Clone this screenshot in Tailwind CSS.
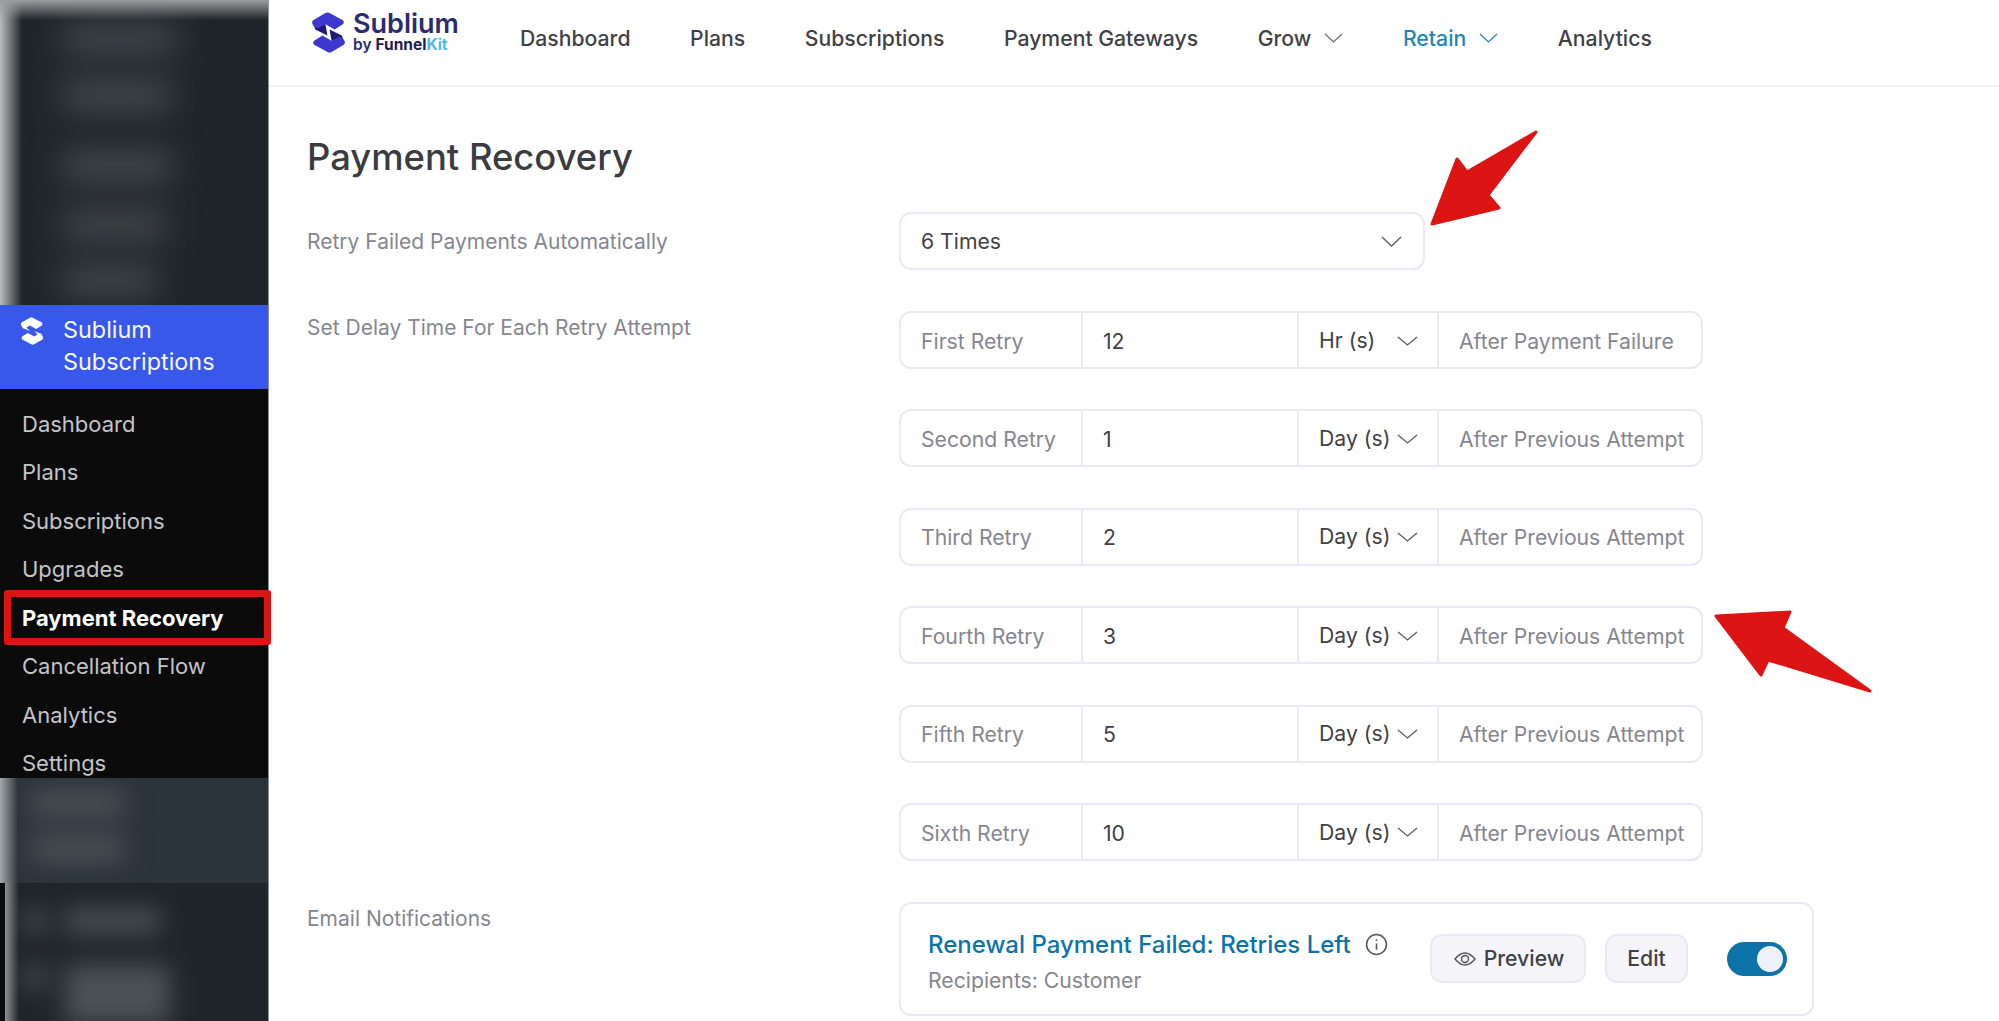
<!DOCTYPE html>
<html lang="en">
<head>
  <meta charset="UTF-8">
  <meta name="viewport" content="width=device-width, initial-scale=1.0">
  <title>Payment Recovery - Sublium</title>
  <script src="https://cdn.jsdelivr.net/npm/@tailwindcss/browser@4"></script>
</head>
<body class="bg-white font-['Inter',sans-serif] text-[21.2px] text-[#3f4146]">
  <div class="relative flex h-[1021px] w-[1999px] overflow-hidden">

    <!-- sidebar -->
    <aside class="flex h-full w-[269px] shrink-0 flex-col border-r border-[#8d9296] bg-[#202529]">
      <!-- blurred wp menu, top -->
      <div class="relative h-[305px] shrink-0 overflow-hidden">
        <div class="flex flex-col pl-[62px] pt-[26px] blur-[16px]">
          <div class="h-[26px] w-[115px] bg-[#474c50]"></div>
          <div class="mt-[30px] h-[28px] w-[110px] bg-[#474c50]"></div>
          <div class="mt-[42px] h-[28px] w-[110px] bg-[#474c50]"></div>
          <div class="mt-[32px] h-[26px] w-[105px] bg-[#474c50]"></div>
          <div class="mt-[30px] h-[26px] w-[95px] bg-[#474c50]"></div>
        </div>
        <div class="absolute inset-y-0 left-0 w-[22px] bg-linear-to-r from-[#b9bcbe] to-transparent"></div>
        <div class="absolute inset-x-0 top-0 h-[20px] bg-linear-to-b from-[#9a9da0] to-transparent"></div>
      </div>

      <!-- plugin menu -->
      <div class="flex h-[84px] shrink-0 items-start gap-[19px] bg-[#3858e9] pl-[20px] pt-[9px] text-[23.4px] leading-[32px] text-[#f4f6fe]">
        <svg class="mt-[3px] h-[28px] w-[24px] shrink-0" viewBox="0 0 32 40" fill="#fff">
          <path d="M13 1 Q15 0 17 1 L30 8 Q32 10 30 12 L22 17 L13 12 L8 15 L13 20 L3 16 L1 13 Q-1 10 1 8 Z"/>
          <path d="M19 39 Q17 40 15 39 L2 32 Q0 30 2 28 L10 23 L19 28 L24 25 L19 20 L29 24 L31 27 Q33 30 31 32 Z"/>
        </svg>
        <div>Sublium<br>Subscriptions</div>
      </div>
      <nav class="flex h-[389px] shrink-0 flex-col overflow-hidden bg-[#0b0b0c] pl-[22px] pt-[11px] text-[22px] text-[#c3c4c7]">
        <a class="flex h-[48.5px] shrink-0 items-center">Dashboard</a>
        <a class="flex h-[48.5px] shrink-0 items-center">Plans</a>
        <a class="flex h-[48.5px] shrink-0 items-center">Subscriptions</a>
        <a class="flex h-[48.5px] shrink-0 items-center">Upgrades</a>
        <a class="flex h-[48.5px] shrink-0 items-center font-bold text-white">Payment Recovery</a>
        <a class="flex h-[48.5px] shrink-0 items-center">Cancellation Flow</a>
        <a class="flex h-[48.5px] shrink-0 items-center">Analytics</a>
        <a class="flex h-[48.5px] shrink-0 items-center">Settings</a>
      </nav>

      <!-- blurred wp menu, bottom -->
      <div class="relative h-[105px] shrink-0 overflow-hidden bg-[#2b333b]">
        <div class="flex flex-col pl-[30px] pt-[12px] blur-[13px]">
          <div class="h-[26px] w-[95px] bg-[#4c5155]"></div>
          <div class="mt-[20px] h-[26px] w-[95px] bg-[#4c5155]"></div>
        </div>
        <div class="absolute inset-y-0 left-0 w-[18px] bg-linear-to-r from-[#a5a8aa] to-transparent"></div>
      </div>
      <div class="relative flex-1 overflow-hidden border-l-[5px] border-[#0b0b0c]">
        <div class="flex flex-col pl-[18px] pt-[26px] blur-[12px]">
          <div class="flex items-center gap-[18px]">
            <div class="h-[24px] w-[24px] rounded-full bg-[#4c5155]"></div>
            <div class="h-[24px] w-[95px] bg-[#4c5155]"></div>
          </div>
          <div class="mt-[32px] flex items-start gap-[18px]">
            <div class="h-[24px] w-[24px] rounded-full bg-[#4c5155]"></div>
            <div class="h-[60px] w-[105px] bg-[#4c5155]"></div>
          </div>
        </div>
        <div class="absolute inset-y-0 left-0 w-[14px] bg-linear-to-r from-[#8f9294] to-transparent"></div>
      </div>
    </aside>

    <!-- main -->
    <main class="flex min-w-0 flex-1 flex-col">
      <header class="flex h-[87px] shrink-0 items-center border-b-2 border-[#f3f3f5] pb-[8px] pl-[43px]">
        <svg class="-mt-[12px] h-[41px] w-[33px] shrink-0" viewBox="0 0 32 40">
          <path fill="#1f1a7a" d="M1 11 L13 12 L15 23 L3 17 Z"/>
          <path fill="#1f1a7a" d="M31 29 L19 28 L17 17 L29 23 Z"/>
          <path fill="#4038cc" d="M13 1 Q15 0 17 1 L30 8 Q32 10 30 12 L22 17 L13 12 L5 16 L1 13 Q-1 10 1 8 Z"/>
          <path fill="#4038cc" d="M19 39 Q17 40 15 39 L2 32 Q0 30 2 28 L10 23 L19 28 L27 24 L31 27 Q33 30 31 32 Z"/>
        </svg>
        <div class="-mt-[13px] ml-[8px] w-[105px]">
          <div class="text-[27px] font-semibold leading-[25px] text-[#2d2a6e]">Sublium</div>
          <div class="whitespace-nowrap text-[15.5px] font-semibold leading-[18px] text-[#2d2a6e]">by <span class="font-bold text-[#1f1d55]">Funnel</span><span class="font-bold text-[#4cb8f2]">Kit</span></div>
        </div>
        <nav class="ml-[62px] flex items-center gap-[59.6px] font-medium">
          <a>Dashboard</a>
          <a>Plans</a>
          <a>Subscriptions</a>
          <a>Payment Gateways</a>
          <a class="flex items-center gap-[13px]">Grow
            <svg class="h-[10px] w-[19px]" viewBox="0 0 19 10" fill="none" stroke="#6b6c72" stroke-width="1.2"><path d="M1 1 L9.5 9 L18 1"/></svg>
          </a>
          <a class="flex items-center gap-[13px] text-[#1d86bb]">Retain
            <svg class="h-[10px] w-[19px]" viewBox="0 0 19 10" fill="none" stroke="currentColor" stroke-width="1.2"><path d="M1 1 L9.5 9 L18 1"/></svg>
          </a>
          <a>Analytics</a>
        </nav>
      </header>

      <section class="pl-[38px] pt-[48px]">
        <h1 class="text-[36.4px] font-medium leading-[44px] text-[#3a3c41]">Payment Recovery</h1>

        <div class="mt-[33px] flex items-center">
          <div class="w-[592px] pt-[1px] text-[21px] text-[#85868f]">Retry Failed Payments Automatically</div>
          <div class="flex h-[58px] w-[526px] items-center justify-between rounded-[12px] border-2 border-[#e9e9f3] pl-[20px] pr-[21px] pt-[1px]">
            6 Times
            <svg class="h-[11px] w-[21px]" viewBox="0 0 21 11" fill="none" stroke="#5c5d63" stroke-width="1.3"><path d="M1 1 L10.5 10 L20 1"/></svg>
          </div>
        </div>

        <div class="mt-[41px] flex">
          <div class="w-[592px] pt-[1px] text-[21px] text-[#85868f]">Set Delay Time For Each Retry Attempt</div>
          <div class="flex flex-col gap-[40.4px]">
            <div class="flex h-[58px] w-[804px] divide-x-2 divide-[#e9e9f3] rounded-[12px] border-2 border-[#e9e9f3]">
              <div class="flex w-[182px] items-center pl-[20px] pt-[3px] text-[#85868f]">First Retry</div>
              <div class="flex w-[216px] items-center pl-[20px] pt-[3px]">12</div>
              <div class="flex w-[140px] items-center justify-between pl-[20px] pr-[19px] pt-[1px]">Hr (s)
                <svg class="h-[10px] w-[21px]" viewBox="0 0 21 10" fill="none" stroke="#5c5d63" stroke-width="1.3"><path d="M1 1 L10.5 9 L20 1"/></svg>
              </div>
              <div class="flex flex-1 items-center whitespace-nowrap pl-[20px] pt-[3px] text-[#85868f]">After Payment Failure</div>
            </div>
            <div class="flex h-[58px] w-[804px] divide-x-2 divide-[#e9e9f3] rounded-[12px] border-2 border-[#e9e9f3]">
              <div class="flex w-[182px] items-center pl-[20px] pt-[3px] text-[#85868f]">Second Retry</div>
              <div class="flex w-[216px] items-center pl-[20px] pt-[3px]">1</div>
              <div class="flex w-[140px] items-center justify-between whitespace-nowrap pl-[20px] pr-[19px] pt-[1px]">Day (s)
                <svg class="h-[10px] w-[21px]" viewBox="0 0 21 10" fill="none" stroke="#5c5d63" stroke-width="1.3"><path d="M1 1 L10.5 9 L20 1"/></svg>
              </div>
              <div class="flex flex-1 items-center whitespace-nowrap pl-[20px] pt-[3px] text-[#85868f]">After Previous Attempt</div>
            </div>
            <div class="flex h-[58px] w-[804px] divide-x-2 divide-[#e9e9f3] rounded-[12px] border-2 border-[#e9e9f3]">
              <div class="flex w-[182px] items-center pl-[20px] pt-[3px] text-[#85868f]">Third Retry</div>
              <div class="flex w-[216px] items-center pl-[20px] pt-[3px]">2</div>
              <div class="flex w-[140px] items-center justify-between whitespace-nowrap pl-[20px] pr-[19px] pt-[1px]">Day (s)
                <svg class="h-[10px] w-[21px]" viewBox="0 0 21 10" fill="none" stroke="#5c5d63" stroke-width="1.3"><path d="M1 1 L10.5 9 L20 1"/></svg>
              </div>
              <div class="flex flex-1 items-center whitespace-nowrap pl-[20px] pt-[3px] text-[#85868f]">After Previous Attempt</div>
            </div>
            <div class="flex h-[58px] w-[804px] divide-x-2 divide-[#e9e9f3] rounded-[12px] border-2 border-[#e9e9f3]">
              <div class="flex w-[182px] items-center pl-[20px] pt-[3px] text-[#85868f]">Fourth Retry</div>
              <div class="flex w-[216px] items-center pl-[20px] pt-[3px]">3</div>
              <div class="flex w-[140px] items-center justify-between whitespace-nowrap pl-[20px] pr-[19px] pt-[1px]">Day (s)
                <svg class="h-[10px] w-[21px]" viewBox="0 0 21 10" fill="none" stroke="#5c5d63" stroke-width="1.3"><path d="M1 1 L10.5 9 L20 1"/></svg>
              </div>
              <div class="flex flex-1 items-center whitespace-nowrap pl-[20px] pt-[3px] text-[#85868f]">After Previous Attempt</div>
            </div>
            <div class="flex h-[58px] w-[804px] divide-x-2 divide-[#e9e9f3] rounded-[12px] border-2 border-[#e9e9f3]">
              <div class="flex w-[182px] items-center pl-[20px] pt-[3px] text-[#85868f]">Fifth Retry</div>
              <div class="flex w-[216px] items-center pl-[20px] pt-[3px]">5</div>
              <div class="flex w-[140px] items-center justify-between whitespace-nowrap pl-[20px] pr-[19px] pt-[1px]">Day (s)
                <svg class="h-[10px] w-[21px]" viewBox="0 0 21 10" fill="none" stroke="#5c5d63" stroke-width="1.3"><path d="M1 1 L10.5 9 L20 1"/></svg>
              </div>
              <div class="flex flex-1 items-center whitespace-nowrap pl-[20px] pt-[3px] text-[#85868f]">After Previous Attempt</div>
            </div>
            <div class="flex h-[58px] w-[804px] divide-x-2 divide-[#e9e9f3] rounded-[12px] border-2 border-[#e9e9f3]">
              <div class="flex w-[182px] items-center pl-[20px] pt-[3px] text-[#85868f]">Sixth Retry</div>
              <div class="flex w-[216px] items-center pl-[20px] pt-[3px]">10</div>
              <div class="flex w-[140px] items-center justify-between whitespace-nowrap pl-[20px] pr-[19px] pt-[1px]">Day (s)
                <svg class="h-[10px] w-[21px]" viewBox="0 0 21 10" fill="none" stroke="#5c5d63" stroke-width="1.3"><path d="M1 1 L10.5 9 L20 1"/></svg>
              </div>
              <div class="flex flex-1 items-center whitespace-nowrap pl-[20px] pt-[3px] text-[#85868f]">After Previous Attempt</div>
            </div>
          </div>
        </div>

        <div class="mt-[41px] flex">
          <div class="w-[592px] pt-[1px] text-[21px] text-[#85868f]">Email Notifications</div>
          <div class="flex h-[114px] w-[915px] items-center justify-between rounded-[12px] border-2 border-[#e9e9f3] pl-[27px] pr-[25px]">
            <div class="pt-[5px]">
              <div class="flex items-center gap-[14px]">
                <span class="text-[24px] font-medium leading-[28px] text-[#0b73a8]">Renewal Payment Failed: Retries Left</span>
                <svg class="h-[23px] w-[23px]" viewBox="0 0 22 22" fill="none" stroke="#55565c" stroke-width="1.5">
                  <circle cx="11" cy="11" r="9.5"/><path d="M11 10 V16"/><path d="M11 6 V7.6"/>
                </svg>
              </div>
              <div class="mt-[9px] text-[21.2px] leading-[24px] text-[#85868f]">Recipients: Customer</div>
            </div>
            <div class="flex items-center">
              <button class="flex h-[49px] w-[156px] items-center justify-center gap-[8px] rounded-[12px] border-2 border-[#e9e9f3] bg-[#f5f5f9] pl-[2px] font-medium">
                <svg class="h-[16px] w-[22px]" viewBox="0 0 22 16" fill="none" stroke="#55565c" stroke-width="1.4">
                  <path d="M1 8 Q11 -4 21 8 Q11 20 1 8 Z"/><circle cx="11" cy="8" r="3.5"/>
                </svg>
                Preview
              </button>
              <button class="ml-[19px] flex h-[49px] w-[83px] items-center justify-center rounded-[12px] border-2 border-[#e9e9f3] bg-[#f5f5f9] font-medium">Edit</button>
              <div class="ml-[39px] flex h-[34px] w-[60px] items-center justify-end rounded-full bg-[#0b73a8] pr-[4px]">
                <div class="h-[26px] w-[26px] rounded-full bg-[#f0f0f8]"></div>
              </div>
            </div>
          </div>
        </div>
      </section>
    </main>

    <!-- annotation overlays -->
    <div class="absolute left-[4px] top-[590px] h-[55px] w-[267px] rounded-[3px] border-[7px] border-[#dc1414]"></div>
    <svg class="absolute left-0 top-0 h-[1021px] w-[1999px]" viewBox="0 0 1999 1021" fill="#dc1414" stroke="#dc1414" stroke-width="3" stroke-linejoin="round">
      <path d="M1432 224 L1457 159 L1467 172 L1536 132 L1488 195 L1499 208 Z"/>
      <path d="M1716 616 L1790 612 L1783 628 L1870 691 L1768 660 L1761 675 Z"/>
    </svg>
  </div>
</body>
</html>
